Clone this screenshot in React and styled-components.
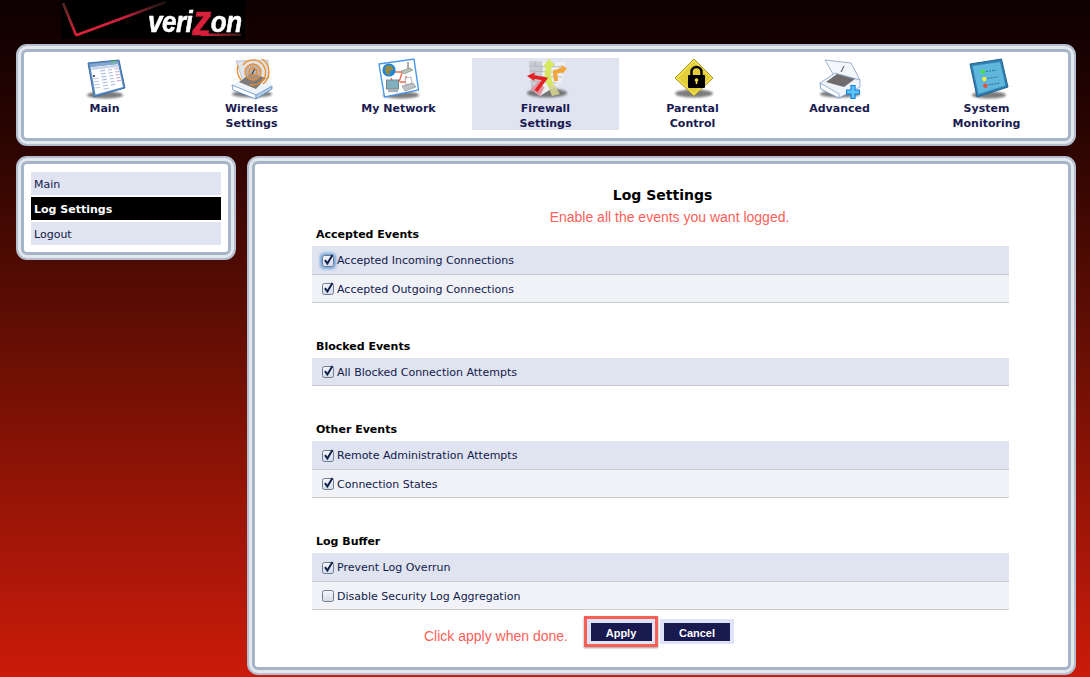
import React from "react";
import styled, { createGlobalStyle } from "styled-components";

const NAV_FONT = `"DejaVu Sans", Verdana, sans-serif`;
const HELV_FONT = `"Liberation Sans", Arial, sans-serif`;

const Shadow = ({ cx = 24, cy = 37, rx = 19, ry = 3.6 }) => (
  <ellipse cx={cx} cy={cy} rx={rx} ry={ry} fill="#5c5c5c" opacity="0.8" filter="url(#soft)" />
);

const Defs = () => (
  <defs>
    <filter id="soft" x="-30%" y="-60%" width="160%" height="220%">
      <feGaussianBlur stdDeviation="1.2" />
    </filter>
  </defs>
);

const MainIcon = () => (
  <svg width="48" height="42" viewBox="0 0 48 42">
    <Defs />
    <Shadow cx={24} cy={37} rx={18} />
    <polygon points="7,5 38,2 44,30 13,39" fill="#5b8fc4" stroke="#3f6fa5" />
    <polygon points="9.5,9 37,6 42,29 14.5,36.5" fill="#fff" />
    <polygon points="9,6 37,3.5 37.6,6 9.6,9" fill="#86a8cf" />
    <rect x="30" y="3" width="5" height="1.5" fill="#5cc46a" />
    <polygon points="10,9.5 37,6.6 37.5,9 10.5,12" fill="#c7d6ea" />
    <circle cx="13" cy="18" r="1" fill="#223" />
    <g stroke="#a9bbdc" strokeWidth="1.1">
      <path d="M19 13l5-.6M19.6 16l5-.6M20.2 19l5-.6M20.8 22l5-.6M21.4 25l5-.7M22 28l5-.7M22.6 31l5-.8" />
      <path d="M27 12l4-.5M27.6 15l4-.5M28.2 18l4-.5M28.8 21l4-.5M29.4 24l4-.5M30 27l4-.6" />
    </g>
    <g stroke="#c9a9cf" strokeWidth="1.1">
      <path d="M33.5 11l4-.5M34 14l4-.5M34.6 17l4-.5M35.2 20l4-.5M35.8 23l4-.6" />
    </g>
    <path d="M11.5 21l6-.8M12 24l6-.8M12.8 27l6-.8M13.4 30l6-.8" stroke="#b9c8e2" strokeWidth="1.1" />
  </svg>
);

const WirelessIcon = () => (
  <svg width="48" height="42" viewBox="0 0 48 42">
    <Defs />
    <Shadow cx={24} cy={36} rx={20} />
    <polygon points="8,3 40,2 41,20 15,23" fill="#dfe4ea" stroke="#aab4c0" strokeWidth="0.7" />
    <polygon points="4,27 21,17 42,22 44,29 28,40 5,32" fill="#eef3fa" />
    <polygon points="4,27 28,37 28,41 5,32" fill="#fff" stroke="#5d8fc7" strokeWidth="0.8" />
    <polygon points="28,37 44,28 44,31 28,41" fill="#b4cbe4" stroke="#5d8fc7" strokeWidth="0.8" />
    <polygon points="11,24 23,15 38,20 28,31" fill="#7d7a78" />
    <circle cx="25" cy="14" r="8" fill="#a8a09a" opacity="0.7" />
    <g fill="none" stroke="#f08a24" strokeWidth="1.3">
      <circle cx="25" cy="14" r="4" />
      <circle cx="25" cy="14" r="8" />
      <path d="M15 7a12.500 12.500 0 1 1 7 19.500" />
      <path d="M34 1a15.500 15.500 0 0 1 1 25" />
      <path d="M10 7a17 17 0 0 0 3 15" />
    </g>
    <path d="M24 16l2.600-5" stroke="#222" strokeWidth="1" />
  </svg>
);

const NetworkIcon = () => (
  <svg width="48" height="42" viewBox="0 0 48 42">
    <Defs />
    <Shadow cx={26} cy={37} rx={18} />
    <polygon points="4,6 39,1 43.5,32 9.5,39" fill="#fff" stroke="#4a97ee" strokeWidth="1.4" />
    <path d="M19 14h8M27 15l-3 9M31 18v6h-6M16 20l2 5" stroke="#f06a4e" strokeWidth="1.4" fill="none" />
    <circle cx="14" cy="12" r="6.6" fill="#1f86d8" />
    <path d="M11 7.5l6 .5 1.500 4-4 1 .5 4-3-.5-2-4z" fill="#9a8a3e" />
    <polygon points="26,13 35,10 38,12 29,16" fill="#b8c2b8" stroke="#6a7a6a" strokeWidth="0.5" />
    <path d="M33 10.500V4" stroke="#444" strokeWidth="0.9" />
    <rect x="11.500" y="22" width="12" height="9" fill="#7fb0c0" stroke="#79838c" />
    <rect x="13" y="31" width="10" height="3.200" fill="#aab0b6" />
    <polygon points="30,20 36,19 37,26 31,27" fill="#fff" stroke="#8b8f95" strokeWidth="0.6" />
    <polygon points="27,28 38,25 41,29 30,33" fill="#bcc1c6" stroke="#777" strokeWidth="0.5" />
  </svg>
);

const FirewallIcon = () => (
  <svg width="48" height="42" viewBox="0 0 48 42">
    <Defs />
    <Shadow cx={25} cy={35} rx={20} ry={4.500} />
    <polygon points="7,3 44,4 40,24 18,38 9,31" fill="#eceef2" />
    <polygon points="7,3 20,3.500 20,34 18,38 9,31" fill="#c9ccd2" />
    <g stroke="#aeb2ba" strokeWidth="0.8" fill="none">
      <path d="M7 8l36 1M7.500 13l34 1.500M8 18l32 1M8.500 23l26 2M9 28l14 2" />
      <path d="M13 3v5M20 8v5M13 13v5M20 18v5M32 4v5M38 9v5M32 14v5" />
    </g>
    <polygon points="9,31 18,22 22,30 18,38" fill="#e88a9a" opacity="0.85" />
    <path d="M27 6C26 14 24 18 29 28" fill="none" stroke="#d6e95c" strokeWidth="6" />
    <polygon points="21,8 27.300,1 33,8" fill="#d6e95c" />
    <polygon points="26,28 32,27 38,36 30,38" fill="#d5d18d" opacity="0.9" />
    <path d="M34 23L33 14L40 12" fill="none" stroke="#f3a436" strokeWidth="4" />
    <polygon points="39,7 45,10.500 40,16" fill="#f3a436" />
    <path d="M14 33L23 21L12 19" fill="none" stroke="#e42020" strokeWidth="3.600" />
    <polygon points="12.500,14.500 5,18 12.500,23" fill="#e42020" />
  </svg>
);

const ParentalIcon = () => (
  <svg width="48" height="42" viewBox="0 0 48 42">
    <Defs />
    <Shadow cx={25} cy={35.500} rx={19} ry={4} />
    <polygon points="25,1 44,20 25,38 6,20" fill="#f3dc4b" stroke="#a89a2a" />
    <polygon points="25,4 41,20 25,35 9,20" fill="#e2ce3b" />
    <rect x="19" y="17" width="17" height="13" rx="1" fill="#000" />
    <path d="M22.500 18v-4a5 5 0 0 1 10 0v4" fill="none" stroke="#000" strokeWidth="2.400" />
    <circle cx="27.500" cy="22" r="1.800" fill="#f3dc4b" />
    <rect x="26.700" y="22" width="1.600" height="4" fill="#f3dc4b" />
  </svg>
);

const AdvancedIcon = () => (
  <svg width="48" height="42" viewBox="0 0 48 42">
    <Defs />
    <Shadow cx={24} cy={36} rx={20} />
    <polygon points="9,2 35,5 44,22 17,16" fill="#f3f6fa" stroke="#9fb2c8" />
    <polygon points="4,25 19,15 44,22 44,29 23,40 5,31" fill="#eef3fa" stroke="#6f97c4" strokeWidth="0.7" />
    <polygon points="10,24 21,16 39,21 28,29" fill="#6f6c6e" />
    <polygon points="4,25 23,36 23,40 5,31" fill="#fff" stroke="#6f97c4" strokeWidth="0.7" />
    <path d="M25 14l3-6" stroke="#333" strokeWidth="0.9" />
    <path d="M37 27v14M30 34h14" stroke="#0f7fe0" strokeWidth="5.200" />
    <path d="M37 28v12M31 34h12" stroke="#5cc4f7" strokeWidth="3" />
  </svg>
);

const SystemIcon = () => (
  <svg width="48" height="42" viewBox="0 0 48 42">
    <Defs />
    <Shadow cx={26} cy={37} rx={17} />
    <polygon points="7,6 38.500,1 45,29 14,39" fill="#2f7fb2" stroke="#26648f" />
    <polygon points="9.500,8 37,4 42.500,27.500 15.500,36" fill="#5fb7dd" />
    <circle cx="19.700" cy="13.700" r="2.200" fill="#44e04a" />
    <circle cx="21.300" cy="21" r="2.200" fill="#f2ee3a" />
    <circle cx="22.300" cy="27.700" r="2.200" fill="#e6543a" />
    <g stroke="#2d6788" strokeWidth="0.9">
      <path d="M23 13.500l10-1.400" strokeDasharray="2 1" />
      <path d="M24.500 20.500l10-1.600" strokeDasharray="2 1" />
      <path d="M25.500 27l11-2" strokeDasharray="2 1" />
    </g>
  </svg>
);

const NAV_ITEMS = [
  { label: ["Main"], Icon: MainIcon },
  { label: ["Wireless", "Settings"], Icon: WirelessIcon },
  { label: ["My Network"], Icon: NetworkIcon },
  { label: ["Firewall", "Settings"], Icon: FirewallIcon, active: true },
  { label: ["Parental", "Control"], Icon: ParentalIcon },
  { label: ["Advanced"], Icon: AdvancedIcon },
  { label: ["System", "Monitoring"], Icon: SystemIcon },
];

const SIDE_ITEMS = [
  { label: "Main" },
  { label: "Log Settings", active: true },
  { label: "Logout" },
];

const SECTIONS = [
  {
    title: "Accepted Events",
    rows: [
      { label: "Accepted Incoming Connections", checked: true, focused: true },
      { label: "Accepted Outgoing Connections", checked: true },
    ],
  },
  {
    title: "Blocked Events",
    rows: [{ label: "All Blocked Connection Attempts", checked: true }],
  },
  {
    title: "Other Events",
    rows: [
      { label: "Remote Administration Attempts", checked: true },
      { label: "Connection States", checked: true },
    ],
  },
  {
    title: "Log Buffer",
    rows: [
      { label: "Prevent Log Overrun", checked: true },
      { label: "Disable Security Log Aggregation", checked: false },
    ],
  },
];

const App = () => {
  return (
    <Page>
      <GlobalStyle />
      <Logo>
        <LogoMark width="184" height="39" viewBox="0 0 184 39">
          <defs>
            <linearGradient id="checkTail" x1="0" x2="1" y1="0" y2="0">
              <stop offset="0" stopColor="#e0203a" />
              <stop offset="0.55" stopColor="#d0203a" />
              <stop offset="1" stopColor="#5a3a30" stopOpacity="0.3" />
            </linearGradient>
            <linearGradient id="checkHead" x1="0" x2="0" y1="0" y2="1">
              <stop offset="0" stopColor="#4a2820" />
              <stop offset="1" stopColor="#e0203a" />
            </linearGradient>
            <linearGradient id="zTail" x1="0" x2="1" y1="0" y2="0">
              <stop offset="0" stopColor="#d8203a" />
              <stop offset="1" stopColor="#3a1a18" />
            </linearGradient>
          </defs>
          <path d="M2 3L15 35" stroke="url(#checkHead)" strokeWidth="2.600" fill="none" />
          <path d="M14.500 35.500L105 2" stroke="url(#checkTail)" strokeWidth="2.600" fill="none" />
          <rect x="140" y="33.500" width="40" height="2.500" fill="url(#zTail)" />
        </LogoMark>
        <LogoWord>
          veri<LogoZ>z</LogoZ>on
        </LogoWord>
      </Logo>

      <Panel>
        <NavBar>
          {NAV_ITEMS.map(({ label, Icon, active }) => (
            <NavItem key={label[0]} $active={active}>
              <Icon />
              <NavLabel>
                {label.map((line) => (
                  <span key={line}>{line}</span>
                ))}
              </NavLabel>
            </NavItem>
          ))}
        </NavBar>
      </Panel>

      <Columns>
        <SidePanel>
          <SideList>
            {SIDE_ITEMS.map((item) => (
              <SideItem key={item.label} $active={item.active}>
                {item.label}
              </SideItem>
            ))}
          </SideList>
        </SidePanel>

        <MainPanel>
          <Title>Log Settings</Title>
          <Hint>Enable all the events you want logged.</Hint>
          {SECTIONS.map((section) => (
            <Section key={section.title}>
              <SectionTitle>{section.title}</SectionTitle>
              {section.rows.map((row, i) => (
                <Row key={row.label} $alt={i % 2 === 1} $tall={i === 0 && section.rows.length > 1}>
                  <CheckBox $focused={row.focused}>
                    {row.checked && (
                      <svg width="13" height="13" viewBox="0 0 13 13">
                        <path
                          d="M3 6.200L5.400 9.500L10.500 1"
                          fill="none"
                          stroke="#10204a"
                          strokeWidth="2"
                        />
                      </svg>
                    )}
                  </CheckBox>
                  {row.label}
                </Row>
              ))}
            </Section>
          ))}
          <Actions>
            <ApplyHint>Click apply when done.</ApplyHint>
            <ApplyWrap>
              <ActionButton $width={61}>Apply</ActionButton>
            </ApplyWrap>
            <CancelWrap>
              <ActionButton $width={66}>Cancel</ActionButton>
            </CancelWrap>
          </Actions>
        </MainPanel>
      </Columns>
    </Page>
  );
};

export default App;

const GlobalStyle = createGlobalStyle`
  html, body {
    margin: 0;
    padding: 0;
    height: 677px;
    overflow: hidden;
    background: #000;
  }
`;

const Page = styled("div")`
  box-sizing: border-box;
  width: 1090px;
  height: 677px;
  padding: 0 14px 0 16px;
  overflow: hidden;
  font-family: ${NAV_FONT};
  background: linear-gradient(180deg, #0c0000 0%, #2a0401 20%, #5a0d03 45%, #8f1406 70%, #cb1b0a 100%);
`;

const Logo = styled("div")`
  position: relative;
  box-sizing: border-box;
  width: 184px;
  height: 39px;
  margin: 0 0 5px 45px;
  padding: 8px 0 0 87px;
  background: #000;
`;

const LogoMark = styled("svg")`
  position: absolute;
  top: 0;
  left: 0;
`;

const LogoWord = styled("div")`
  position: relative;
  height: 30px;
  white-space: nowrap;
  font: italic bold 26px/30px "Liberation Sans", Arial, sans-serif;
  letter-spacing: -0.5px;
  color: #fff;
  -webkit-text-stroke: 0.5px currentColor;
  transform: scaleY(1.12);
  transform-origin: 0 24px;
`;

const LogoZ = styled("span")`
  display: inline-block;
  height: 38px;
  margin: -9px 0;
  color: #d8203a;
  font-size: 38px;
  line-height: 38px;
  vertical-align: -3px;
`;

const Panel = styled("div")`
  box-sizing: border-box;
  height: 102px;
  padding: 6px;
  background: #fff;
  border: 2px solid #b3bfce;
  border-radius: 11px;
  box-shadow: inset 0 0 0 3px #e3e8ee, inset 0 0 0 6px #a5b4c7;
`;

const NavBar = styled("div")`
  display: grid;
  grid-template-columns: repeat(7, 147px);
  padding: 6px 0 0 7px;
`;

const NavItem = styled("div")`
  display: flex;
  flex-direction: column;
  align-items: center;
  height: 72px;
  background: ${(p) => (p.$active ? "#e0e3f0" : "transparent")};
  svg {
    flex: none;
  }
`;

const NavLabel = styled("div")`
  display: flex;
  flex-direction: column;
  align-items: center;
  margin-top: 1px;
  font-size: 11px;
  font-weight: bold;
  line-height: 15px;
  color: #191a50;
`;

const Columns = styled("div")`
  display: grid;
  grid-template-columns: 220px 829px;
  justify-content: space-between;
  align-items: start;
  margin-top: 10px;
`;

const SidePanel = styled(Panel)`
  height: 104px;
`;

const SideList = styled("div")`
  display: flex;
  flex-direction: column;
  gap: 2px;
  padding: 8px 0 0 7px;
`;

const SideItem = styled("div")`
  box-sizing: border-box;
  width: 190px;
  height: 23px;
  padding: 1px 0 0 3px;
  font-size: 11px;
  font-weight: ${(p) => (p.$active ? "bold" : "normal")};
  line-height: 23px;
  color: ${(p) => (p.$active ? "#fff" : "#10204a")};
  background: ${(p) => (p.$active ? "#000" : "#e0e3f0")};
`;

const MainPanel = styled(Panel)`
  height: 519px;
  padding: 28px 65px 0 63px;
`;

const Title = styled("div")`
  padding-left: 4px;
  font-size: 14px;
  font-weight: bold;
  line-height: 18px;
  text-align: center;
  color: #000;
`;

const Hint = styled("div")`
  margin-top: 4px;
  padding-left: 18px;
  font-family: ${HELV_FONT};
  font-size: 14px;
  line-height: 18px;
  text-align: center;
  color: #ff6058;
`;

const Section = styled("section")`
  margin: 0 0 36px;
  &:first-of-type {
    margin-top: 1px;
  }
  &:last-of-type {
    margin-bottom: 0;
  }
`;

const SectionTitle = styled("div")`
  height: 19px;
  padding: 0 0 0 4px;
  font-size: 11px;
  font-weight: bold;
  line-height: 16px;
  color: #000;
`;

const Row = styled("div")`
  display: flex;
  align-items: center;
  box-sizing: border-box;
  height: ${(p) => (p.$tall ? "29px" : "28px")};
  padding: 1px 0 0 10px;
  font-size: 11px;
  color: #10204a;
  background: ${(p) => (p.$alt ? "#f1f2f8" : "#e0e3f0")};
  border-bottom: 1px solid #c9cacd;
`;

const CheckBox = styled("span")`
  display: inline-flex;
  box-sizing: border-box;
  flex: none;
  width: 12px;
  height: 12px;
  margin-right: 3px;
  border: 1px solid #6f7a8e;
  border-radius: 2.5px;
  background: linear-gradient(180deg, #f4f6fb 0%, #d3dcec 100%);
  box-shadow: ${(p) => (p.$focused ? "0 0 3px 2px #6ea4dc" : "none")};
  svg {
    flex: none;
    margin: -2px -2px 0 -1px;
  }
`;

const Actions = styled("div")`
  display: flex;
  align-items: center;
  margin-top: 6px;
  padding-left: 112px;
`;

const ApplyHint = styled("div")`
  width: 160px;
  margin-top: 9px;
  font-family: ${HELV_FONT};
  font-size: 14px;
  color: #ff6058;
`;

const ApplyWrap = styled("div")`
  display: flex;
  justify-content: center;
  align-items: center;
  box-sizing: border-box;
  width: 74px;
  height: 31px;
  background: #dfe3f6;
  border: 3px solid #fb5f55;
  box-shadow: 0 1px 2px #9a9a9a;
`;

const CancelWrap = styled("div")`
  display: flex;
  justify-content: center;
  align-items: center;
  width: 74px;
  height: 25px;
  margin-left: 2px;
  background: #dfe3f9;
`;

const ActionButton = styled("div")`
  width: ${(p) => p.$width}px;
  height: 18px;
  font-family: ${HELV_FONT};
  font-size: 11px;
  font-weight: bold;
  line-height: 20px;
  text-align: center;
  color: #fff;
  background: #191a50;
`;
